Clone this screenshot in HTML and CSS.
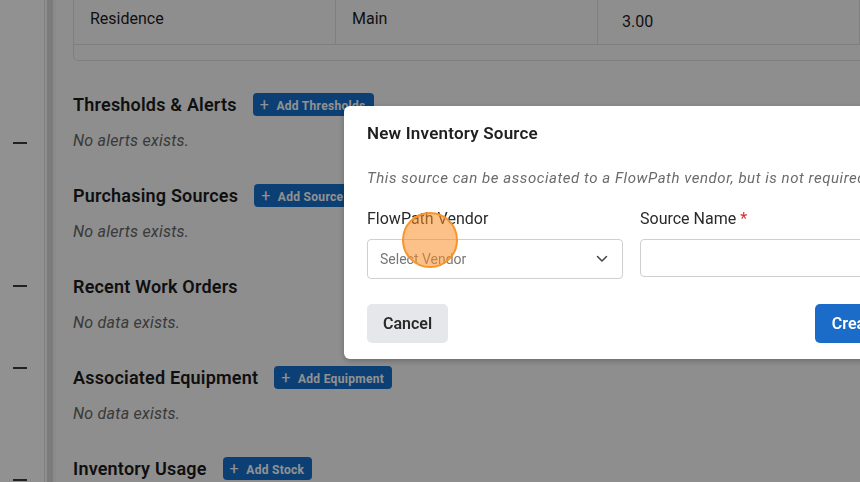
FILE: index.html
```html
<!DOCTYPE html>
<html lang="en">
<head>
  <meta charset="UTF-8" />
  <meta name="viewport" content="width=device-width, initial-scale=1.0"/>
  <title>Inventory Item</title>
  <link rel="stylesheet" href="styles.css">
</head>
<body>

  <div class="app">
    <aside class="sidebar">
      <span class="dash"></span>
      <span class="dash"></span>
      <span class="dash"></span>
      <span class="dash"></span>
    </aside>
    <div class="rail"></div>

    <main class="main">
      <div class="card">
        <div class="row">
          <div class="cell">Residence</div>
          <div class="cell">Main</div>
          <div class="cell cell-num">3.00</div>
          <div class="cell"></div>
        </div>
        <div class="card-foot"></div>
      </div>

      <section class="section">
        <div class="section-head">
          <h2>Thresholds &amp; Alerts</h2>
          <button class="add-btn"><span class="plus">+</span> Add Thresholds</button>
        </div>
        <p class="empty">No alerts exists.</p>
      </section>

      <section class="section">
        <div class="section-head">
          <h2>Purchasing Sources</h2>
          <button class="add-btn"><span class="plus">+</span> Add Source</button>
        </div>
        <p class="empty">No alerts exists.</p>
      </section>

      <section class="section">
        <div class="section-head">
          <h2>Recent Work Orders</h2>
        </div>
        <p class="empty">No data exists.</p>
      </section>

      <section class="section">
        <div class="section-head">
          <h2>Associated Equipment</h2>
          <button class="add-btn"><span class="plus">+</span> Add Equipment</button>
        </div>
        <p class="empty">No data exists.</p>
      </section>

      <section class="section">
        <div class="section-head">
          <h2>Inventory Usage</h2>
          <button class="add-btn"><span class="plus">+</span> Add Stock</button>
        </div>
      </section>
    </main>
  </div>

  <div class="backdrop"></div>

  <div class="modal">
    <h3 class="modal-title">New Inventory Source</h3>
    <p class="modal-note">This source can be associated to a FlowPath vendor, but is not required.</p>

    <div class="fields">
      <div class="field">
        <label>FlowPath Vendor</label>
        <div class="select">
          <span>Select Vendor</span>
          <svg width="12" height="8" viewBox="0 0 12 8"><polyline points="1.5,1.5 6,6 10.5,1.5" fill="none" stroke="#444" stroke-width="1.5" stroke-linecap="round" stroke-linejoin="round"/></svg>
        </div>
      </div>
      <div class="field">
        <label>Source Name <span class="req">*</span></label>
        <input class="input" type="text">
      </div>
    </div>

    <div class="modal-actions">
      <button class="btn btn-cancel">Cancel</button>
      <button class="btn btn-create">Create</button>
    </div>
  </div>

  <!-- click marker -->
  <div class="click-dot"></div>

</body>
</html>
```

FILE: styles.css
```css
body {
  margin: 0;
  height: 482px;
  overflow: hidden;
  font-family: Roboto, "Liberation Sans", sans-serif;
  color: #1c1c1c;
  background: #f9f9f9;
}

.app {
  display: flex;
  height: 482px;
}

.sidebar {
  width: 45px;
  flex-shrink: 0;
  background: #ffffff;
  border-right: 1px solid #e2e2e2;
  display: flex;
  flex-direction: column;
  padding-left: 13px;
  box-sizing: border-box;
}
.dash {
  display: block;
  width: 14px;
  height: 2px;
  background: #3a3a3a;
}
.dash:nth-child(1) { margin-top: 142px; }
.dash:nth-child(2) { margin-top: 141px; }
.dash:nth-child(3) { margin-top: 80px; }
.dash:nth-child(4) { margin-top: 110px; }

.rail {
  width: 6px;
  margin-left: 2px;
  flex-shrink: 0;
  background: #d8d8d8;
  border-right: 3px solid #f2f2f2;
}

.main {
  flex: 1;
  min-width: 0;
  padding-left: 17px;
}

/* table card, scrolled so only the last row shows */
.card {
  margin-top: -1px;
  border: 1px solid #e0e0e0;
  border-top: none;
  border-radius: 0 0 5px 5px;
  background: #f9f9f9;
  width: 900px;
}
.row {
  display: flex;
  height: 45px;
  border-bottom: 1px solid #e0e0e0;
}
.cell {
  width: 262px;
  flex-shrink: 0;
  padding: 10px 16px 0;
  box-sizing: border-box;
  border-right: 1px solid #e0e0e0;
  font-size: 16px;
}
.cell-num {
  padding-top: 13px;
  padding-left: 24px;
}
.card-foot {
  height: 15px;
}

.section {
  margin-top: 31px;
}
.section-head {
  display: flex;
  align-items: center;
  gap: 16px;
  height: 24px;
}
.section-head h2 {
  margin: 0;
  font-size: 18px;
  font-weight: 600;
  letter-spacing: 0.2px;
}
.add-btn {
  height: 23px;
  padding: 0 8px 0 7px;
  border: none;
  border-radius: 4px;
  background: #1670cc;
  color: #ffffff;
  font-family: inherit;
  font-size: 12px;
  font-weight: 700;
  letter-spacing: 0.3px;
}
.plus {
  font-size: 16px;
  font-weight: 400;
  margin-right: 4px;
}
.empty {
  margin: 14px 0 0;
  font-size: 16px;
  line-height: 22px;
  font-style: italic;
  letter-spacing: 0.25px;
  color: #666666;
}

.backdrop {
  position: fixed;
  inset: 0;
  background: rgba(0, 0, 0, 0.43);
}

.modal {
  position: fixed;
  left: 344px;
  top: 106px;
  width: 575px;
  height: 253px;
  box-sizing: border-box;
  padding: 15px 23px 16px;
  background: #ffffff;
  border-radius: 6px;
  box-shadow: 0 2px 6px rgba(0, 0, 0, 0.25);
}
.modal-title {
  margin: 0;
  font-size: 17px;
  line-height: 24px;
  font-weight: 600;
  letter-spacing: 0.2px;
  color: #1f1f1f;
}
.modal-note {
  margin: 22px 0 0;
  font-size: 15px;
  line-height: 22px;
  font-style: italic;
  letter-spacing: 0.55px;
  color: #6b6b6b;
  white-space: nowrap;
}
.fields {
  display: grid;
  grid-template-columns: 256px 1fr;
  gap: 17px;
  margin-top: 19px;
}
.field label {
  display: block;
  font-size: 16px;
  line-height: 22px;
  color: #2a2a2a;
  margin-bottom: 9px;
}
.req {
  color: #d93025;
}
.select {
  height: 40px;
  box-sizing: border-box;
  border: 1px solid #cfcfcf;
  border-radius: 4px;
  display: flex;
  align-items: center;
  justify-content: space-between;
  padding: 0 14px 0 12px;
  font-size: 14px;
  color: #777777;
}
.input {
  display: block;
  width: 100%;
  height: 38px;
  box-sizing: border-box;
  border: 1px solid #cfcfcf;
  border-radius: 4px;
}
.modal-actions {
  display: flex;
  justify-content: space-between;
  margin-top: 25px;
}
.btn {
  height: 39px;
  border: none;
  border-radius: 5px;
  font-family: inherit;
  font-size: 16px;
  font-weight: 600;
  padding: 0 16px;
}
.btn-cancel {
  background: #e6e7ea;
  color: #2a2a2a;
}
.btn-create {
  background: #1a6cc8;
  color: #ffffff;
  width: 81px;
}

.click-dot {
  position: fixed;
  left: 402px;
  top: 212px;
  width: 52px;
  height: 52px;
  border-radius: 50%;
  background: rgba(250, 140, 40, 0.55);
  border: 2px solid #f6952a;
}
```
